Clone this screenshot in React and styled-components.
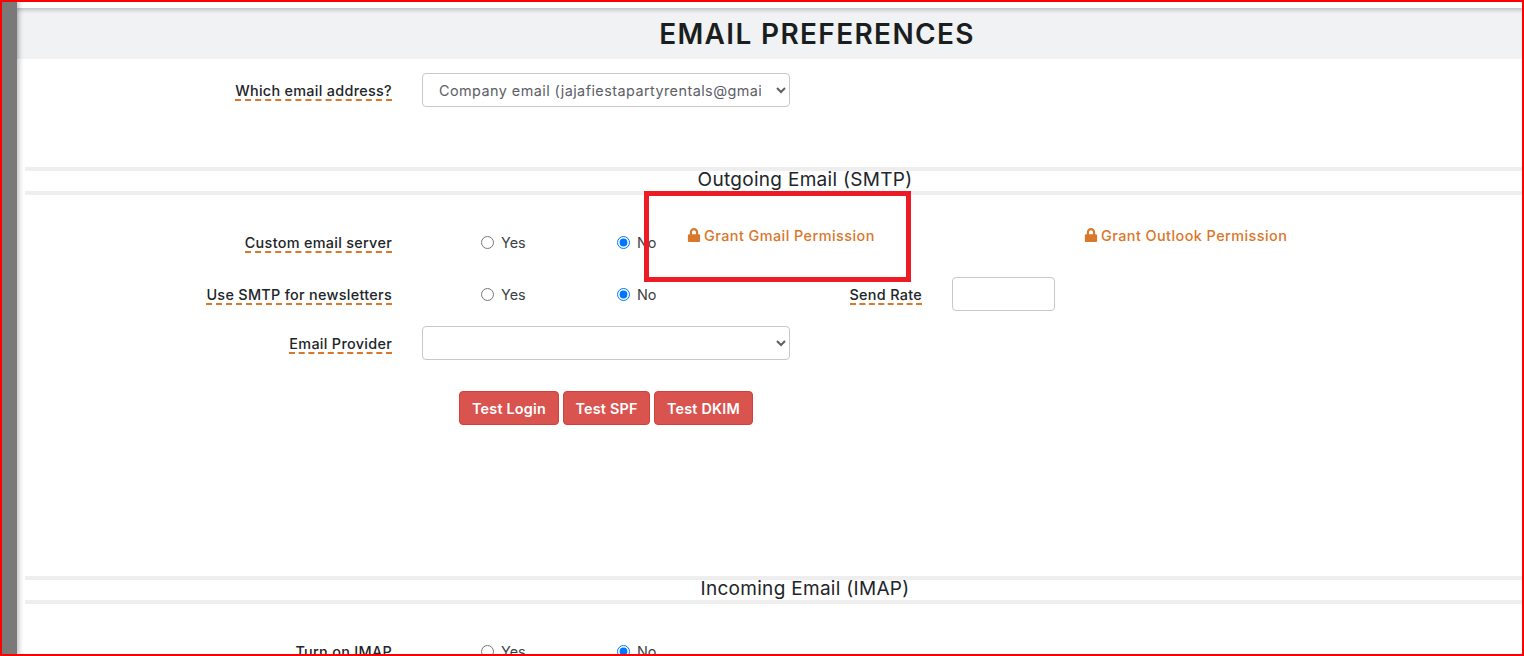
import React from 'react';
import styled, { createGlobalStyle } from 'styled-components';
import { FaLock } from 'react-icons/fa';

const Global = createGlobalStyle`
html, body {
    margin: 0;
    padding: 0;
    background: #fff;
    overflow: hidden;
}
body {
    font-family: 'Inter', 'Liberation Sans', sans-serif;
    color: #212529;
}
`;

const Page = styled.div`
display: flex;
height: 656px;
width: 1524px;
overflow: hidden;
`;

const Sidebar = styled.div`
flex: 0 0 17px;
background: #7a7977;
box-shadow: 2px 0 5px rgba(0,0,0,.25);
z-index: 1;
`;

const Main = styled.div`
flex: 0 0 1600px;
padding-top: 8px;
`;

const Header = styled.h1`
margin: 0;
height: 51px;
background: #f1f2f4;
box-shadow: inset 0 3px 4px -1px rgba(0,0,0,.22);
display: flex;
align-items: center;
justify-content: center;
font-size: 28px;
font-weight: 600;
letter-spacing: 1.35px;
color: #1b1e21;
`;

const Content = styled.div`
padding-left: 8px;
width: 1560px;
`;

const Row = styled.div`
display: flex;
align-items: center;
height: ${props => props.height}px;
margin-top: ${props => props.top || 0}px;
`;

const LabelCell = styled.div`
flex: 0 0 ${props => props.width || 367}px;
display: flex;
justify-content: flex-end;
margin-right: 30px;
`;

const Label = styled.span`
font-size: 14.4px;
font-weight: 500;
line-height: 17px;
padding-top: 2px;
letter-spacing: .3px;
color: #212529;
border-bottom: 2px dashed #d9772b;
`;

const Select = styled.select`
width: 368px;
height: 34px;
padding: 0 12px;
font-family: inherit;
font-size: 14.4px;
letter-spacing: .45px;
color: #5c6066;
background: #fff;
border: 1px solid #c8c8c8;
border-radius: 4px;
`;

const RadioGroup = styled.div`
display: flex;
padding-left: 59px;
`;

const RadioItem = styled.label`
flex: 0 0 ${props => props.width}px;
display: flex;
align-items: center;
font-size: 14.4px;
color: #3a3f45;
`;

const Radio = styled.input.attrs({ type: 'radio' })`
width: 13px;
height: 13px;
margin: 0 7px 0 0;
accent-color: #0075ff;
`;

const Section = styled.div`
margin-top: ${props => props.top}px;
height: 20px;
border-top: 4px solid #eeeeee;
border-bottom: 4px solid #eeeeee;
display: flex;
align-items: center;
justify-content: center;
font-size: 19px;
font-weight: 400;
letter-spacing: .3px;
color: #212529;
line-height: 20px;
`;

const SectionText = styled.span`
margin-top: -2px;
`;

const GrantLink = styled.a`
flex: 0 0 ${props => props.width}px;
margin-left: ${props => props.left || 0}px;
display: flex;
align-items: center;
gap: 3px;
padding-bottom: 14px;
font-size: 14.4px;
font-weight: 500;
letter-spacing: .45px;
color: #d9772b;
text-decoration: none;
`;

const RateInput = styled.input`
box-sizing: border-box;
width: 103px;
height: 34px;
border: 1px solid #c8c8c8;
border-radius: 4px;
`;

const Buttons = styled.div`
display: flex;
gap: 4px;
margin-top: 31px;
padding-left: 434px;
`;

const Button = styled.button`
box-sizing: border-box;
width: ${props => props.width}px;
height: 34px;
padding: 0;
font-family: inherit;
font-size: 14.4px;
font-weight: 600;
letter-spacing: .2px;
color: #fff;
background: #d9534f;
border: 1px solid #d43f3a;
border-radius: 4px;
`;

const Frame = styled.div`
position: fixed;
inset: 0;
border: 2px solid #ff0000;
pointer-events: none;
z-index: 5;
`;

const Annotation = styled.div`
position: fixed;
left: 644px;
top: 191px;
width: 257px;
height: 81px;
border: 5px solid #ed1c24;
pointer-events: none;
z-index: 4;
`;

function App() {
    return (
        <Page>
            <Global />
            <Sidebar />
            <Main>
                <Header>EMAIL PREFERENCES</Header>
                <Content>
                    <Row height={34} top={14}>
                        <LabelCell><Label>Which email address?</Label></LabelCell>
                        <Select defaultValue="company">
                            <option value="company">Company email (jajafiestapartyrentals@gmail.com)</option>
                        </Select>
                    </Row>

                    <Section top={60}><SectionText>Outgoing Email (SMTP)</SectionText></Section>

                    <Row height={34} top={30}>
                        <LabelCell><Label>Custom email server</Label></LabelCell>
                        <RadioGroup>
                            <RadioItem width={136}><Radio name="custom" />Yes</RadioItem>
                            <RadioItem width={65}><Radio name="custom" defaultChecked />No</RadioItem>
                        </RadioGroup>
                        <GrantLink width={397} left={5}><FaLock size={14} />Grant Gmail Permission</GrantLink>
                        <GrantLink width={240}><FaLock size={14} />Grant Outlook Permission</GrantLink>
                    </Row>

                    <Row height={34} top={18}>
                        <LabelCell><Label>Use SMTP for newsletters</Label></LabelCell>
                        <RadioGroup>
                            <RadioItem width={136}><Radio name="smtp" />Yes</RadioItem>
                            <RadioItem width={65}><Radio name="smtp" defaultChecked />No</RadioItem>
                        </RadioGroup>
                        <LabelCell width={240}><Label>Send Rate</Label></LabelCell>
                        <RateInput />
                    </Row>

                    <Row height={34} top={15}>
                        <LabelCell><Label>Email Provider</Label></LabelCell>
                        <Select defaultValue="">
                            <option value=""></option>
                        </Select>
                    </Row>

                    <Buttons>
                        <Button width={100}>Test Login</Button>
                        <Button width={87}>Test SPF</Button>
                        <Button width={99}>Test DKIM</Button>
                    </Buttons>

                    <Section top={151}><SectionText>Incoming Email (IMAP)</SectionText></Section>

                    <Row height={34} top={30}>
                        <LabelCell><Label>Turn on IMAP</Label></LabelCell>
                        <RadioGroup>
                            <RadioItem width={136}><Radio name="imap" />Yes</RadioItem>
                            <RadioItem width={65}><Radio name="imap" defaultChecked />No</RadioItem>
                        </RadioGroup>
                    </Row>
                </Content>
            </Main>
            <Annotation />
            <Frame />
        </Page>
    );
}

export default App;
